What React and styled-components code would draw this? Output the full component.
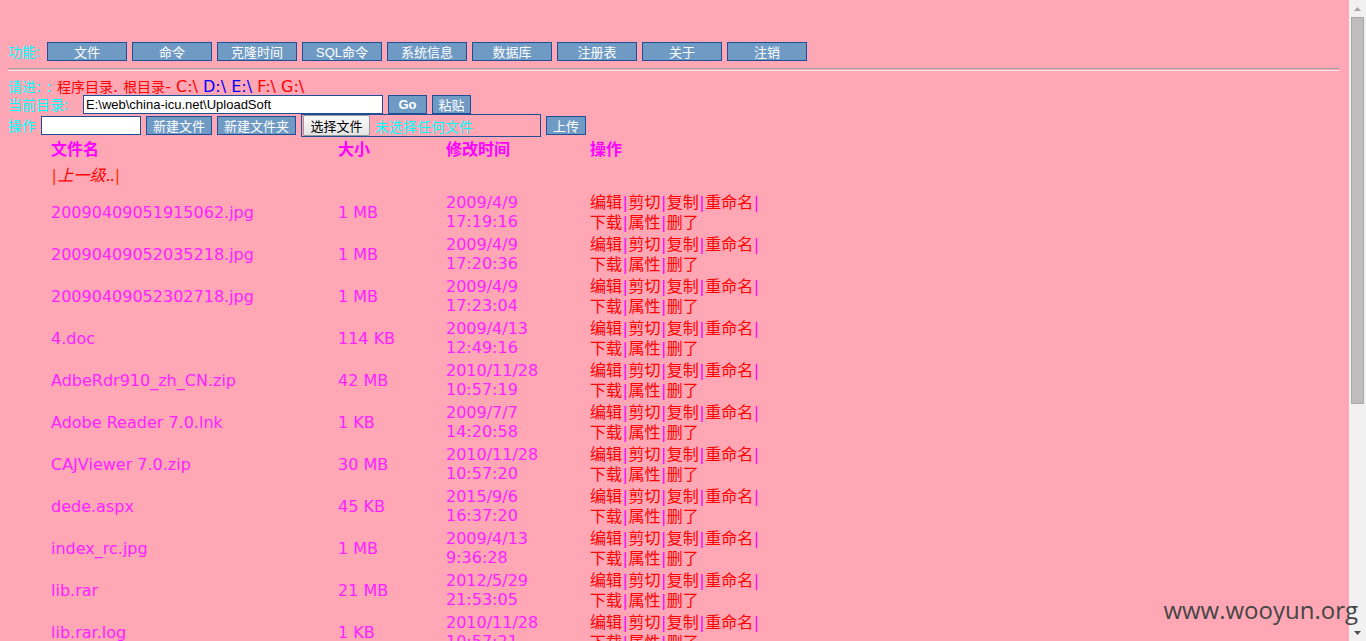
import React from 'react';
import styled, { createGlobalStyle } from 'styled-components';

const GlobalStyle = createGlobalStyle`
    html, body {
        margin: 0;
        padding: 0;
        overflow: hidden;
        background: #FFA7B5;
    }
`

const Frame = styled.div`
    position: relative;
    display: flex;
    flex-direction: row;
    height: 641px;
    overflow: hidden;
`

const Page = styled.div`
    flex: 1;
    padding: 42px 10px 0 8px;
    font-family: "Noto Sans CJK SC", sans-serif;
    font-size: 14px;
    overflow: hidden;
`

const Row = styled.div`
    display: flex;
    flex-direction: row;
    align-items: center;
    gap: 5px;
    height: ${props => props.h || 19}px;
`

const Label = styled.span`
    color: #00FFFF;
    width: ${props => props.w}px;
    line-height: 19px;
    flex: none;
    white-space: nowrap;
`

const Button = styled.div`
    box-sizing: border-box;
    width: ${props => props.w || 80}px;
    height: 19px;
    flex: none;
    display: flex;
    align-items: center;
    justify-content: center;
    background: #6F9AC4;
    border: 1px solid #1D4E97;
    color: #FFFFFF;
    font-family: "Liberation Sans", "Noto Sans CJK SC", sans-serif;
    font-size: 13px;
    font-weight: ${props => props.bold ? 700 : 400};
`

const Rule = styled.div`
    margin-top: 7px;
    height: 1px;
    border-top: 1px solid #A0A0A0;
    border-bottom: 1px solid #E8E8E8;
`

const InfoLine = styled.div`
    margin-top: 7px;
    height: 17px;
    line-height: 17px;
    white-space: pre;
    font-family: "DejaVu Sans", sans-serif;
    font-size: 16px;
`

const Txt = styled.span`
    color: ${props => props.c};
`

const Cjk = styled.span`
    font-family: "Noto Sans CJK SC", sans-serif;
    font-size: 14px;
`

const TextBox = styled.div`
    box-sizing: border-box;
    width: ${props => props.w}px;
    height: 19px;
    flex: none;
    background: #FFFFFF;
    border: 1px solid #1D4E97;
    padding: 0 2px;
    line-height: 17px;
    font-family: "Liberation Sans", sans-serif;
    font-size: 13px;
    color: #000;
    white-space: nowrap;
    overflow: hidden;
`

const FileBox = styled.div`
    box-sizing: border-box;
    width: 240px;
    height: 23px;
    flex: none;
    display: flex;
    align-items: center;
    gap: 5px;
    border: 1px solid #1D4E97;
    padding: 0 1px;
`

const NativeBtn = styled.div`
    box-sizing: border-box;
    width: 67px;
    height: 21px;
    display: flex;
    align-items: center;
    justify-content: center;
    background: linear-gradient(#FAFAFA, #E4E4E4);
    border: 1px solid #9A9A9A;
    border-radius: 2px;
    color: #000;
    font-size: 13px;
`

const Table = styled.div`
    padding-left: 43px;
    display: grid;
    grid-template-columns: 287px 108px 144px auto;
    align-items: center;
`

const Head = styled.div`
    height: 22px;
    line-height: 22px;
    color: #FF00FF;
    font-weight: 700;
    font-size: 16px;
`

const UpCell = styled.div`
    grid-column: 1 / span 4;
    height: 32px;
    line-height: 30px;
    font-style: italic;
    color: #FF0000;
    font-size: 16px;
`

const Pipe = styled.span`
    color: ${props => props.c || '#FF00FF'};
    font-family: "DejaVu Sans", sans-serif;
    font-style: normal;
    padding: 0 0.5px;
`

const Cell = styled.div`
    height: 42px;
    display: flex;
    flex-direction: column;
    justify-content: center;
    color: #FF22FF;
    font-family: ${props => props.cjk ? '"Noto Sans CJK SC", sans-serif' : '"DejaVu Sans", sans-serif'};
    font-size: 16px;
    line-height: 19px;
    white-space: nowrap;
`

const Op = styled.span`
    color: #FF0000;
`

const Scrollbar = styled.div`
    width: 17px;
    flex: none;
    background: #F1F1F1;
    display: flex;
    flex-direction: column;
    align-items: center;
`

const Arrow = styled.div`
    height: 17px;
    width: 17px;
    display: flex;
    align-items: center;
    justify-content: center;
`

const Thumb = styled.div`
    box-sizing: border-box;
    width: 13px;
    height: 387px;
    background: #BDBDBD;
    border: 1px solid #A9A9A9;
`

const Spacer = styled.div`
    flex: 1;
`

const Watermark = styled.div`
    position: absolute;
    right: 8px;
    bottom: 19px;
    font-family: "Open Sans", "Noto Sans", sans-serif;
    font-size: 24px;
    line-height: 24px;
    color: #454545;
`

const navItems = ['文件', '命令', '克隆时间', 'SQL命令', '系统信息', '数据库', '注册表', '关于', '注销']

const files = [
    ['20090409051915062.jpg', '1 MB', '2009/4/9', '17:19:16'],
    ['20090409052035218.jpg', '1 MB', '2009/4/9', '17:20:36'],
    ['20090409052302718.jpg', '1 MB', '2009/4/9', '17:23:04'],
    ['4.doc', '114 KB', '2009/4/13', '12:49:16'],
    ['AdbeRdr910_zh_CN.zip', '42 MB', '2010/11/28', '10:57:19'],
    ['Adobe Reader 7.0.lnk', '1 KB', '2009/7/7', '14:20:58'],
    ['CAJViewer 7.0.zip', '30 MB', '2010/11/28', '10:57:20'],
    ['dede.aspx', '45 KB', '2015/9/6', '16:37:20'],
    ['index_rc.jpg', '1 MB', '2009/4/13', '9:36:28'],
    ['lib.rar', '21 MB', '2012/5/29', '21:53:05'],
    ['lib.rar.log', '1 KB', '2010/11/28', '10:57:21'],
    ['web.config', '1 KB', '2010/11/28', '10:57:22'],
]

function Ops () {
    return (
        <>
            <div>
                <Op>编辑</Op><Pipe>|</Pipe><Op>剪切</Op><Pipe>|</Pipe><Op>复制</Op><Pipe>|</Pipe><Op>重命名</Op><Pipe>|</Pipe>
            </div>
            <div>
                <Op>下载</Op><Pipe>|</Pipe><Op>属性</Op><Pipe>|</Pipe><Op>删了</Op>
            </div>
        </>
    )
}

class App extends React.Component {
    render () {
        return (
            <Frame>
                <GlobalStyle />
                <Page>
                    <Row>
                        <Label w={34}>功能:</Label>
                        {navItems.map(n => <Button key={n}>{n}</Button>)}
                    </Row>
                    <Rule />
                    <InfoLine>
                        <Txt c="#00FFFF"><Cjk>请进</Cjk>: : </Txt>
                        <Txt c="#FF0000"><Cjk>程序目录</Cjk>. <Cjk>根目录</Cjk>- </Txt>
                        <Txt c="#FF0000">C:\ </Txt>
                        <Txt c="#0000FF">D:\ E:\ </Txt>
                        <Txt c="#FF0000">F:\ G:\</Txt>
                    </InfoLine>
                    <Row>
                        <Label w={70}>当前目录:</Label>
                        <TextBox w={300}>E:\web\china-icu.net\UploadSoft</TextBox>
                        <Button w={39} bold>Go</Button>
                        <Button w={39}>粘贴</Button>
                    </Row>
                    <Row h={23}>
                        <Label w={28}>操作</Label>
                        <TextBox w={100} />
                        <Button w={66}>新建文件</Button>
                        <Button w={79}>新建文件夹</Button>
                        <FileBox>
                            <NativeBtn>选择文件</NativeBtn>
                            <Txt c="#00FFFF">未选择任何文件</Txt>
                        </FileBox>
                        <Button w={40}>上传</Button>
                    </Row>
                    <Table>
                        <Head>文件名</Head>
                        <Head>大小</Head>
                        <Head>修改时间</Head>
                        <Head>操作</Head>
                        <UpCell><Pipe c="#FF3300">|</Pipe>上一级..<Pipe c="#FF3300">|</Pipe></UpCell>
                        {files.map(f => (
                            <React.Fragment key={f[0]}>
                                <Cell>{f[0]}</Cell>
                                <Cell>{f[1]}</Cell>
                                <Cell><div>{f[2]}</div><div>{f[3]}</div></Cell>
                                <Cell cjk><Ops /></Cell>
                            </React.Fragment>
                        ))}
                    </Table>
                </Page>
                <Scrollbar>
                    <Arrow>
                        <svg width="7" height="4" viewBox="0 0 7 4"><path d="M0 4 L3.5 0 L7 4 Z" fill="#A3A3A3" /></svg>
                    </Arrow>
                    <Thumb />
                    <Spacer />
                    <Arrow>
                        <svg width="7" height="4" viewBox="0 0 7 4"><path d="M0 0 L3.5 4 L7 0 Z" fill="#505050" /></svg>
                    </Arrow>
                </Scrollbar>
                <Watermark>www.wooyun.org</Watermark>
            </Frame>
        )
    }
}

export default App
